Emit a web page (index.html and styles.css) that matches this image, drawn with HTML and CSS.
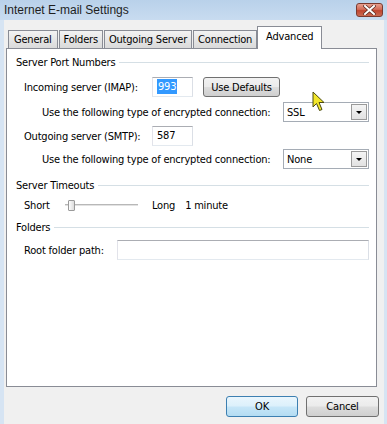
FILE: index.html
```html
<!DOCTYPE html>
<html lang="en">
<head>
  <meta charset="UTF-8" />
  <meta name="viewport" content="width=device-width, initial-scale=1" />
  <title>Internet E-mail Settings</title>
  <link rel="stylesheet" href="styles.css">
</head>
<body>
  <div class="window">
    <div class="titlebar">
      <span class="title">Internet E-mail Settings</span>
      <div class="close-btn">
        <svg width="13" height="10" viewBox="0 0 13 10">
          <path d="M2 1 L11 9 M11 1 L2 9" stroke="#5a2a22" stroke-width="3.4" stroke-linecap="square" />
          <path d="M2 1 L11 9 M11 1 L2 9" stroke="#fff" stroke-width="2" stroke-linecap="square" />
        </svg>
      </div>
    </div>

    <div class="client">
      <div class="tabs">
        <div class="tab">General</div>
        <div class="tab">Folders</div>
        <div class="tab">Outgoing Server</div>
        <div class="tab">Connection</div>
        <div class="tab active">Advanced</div>
      </div>

      <div class="panel">
        <div class="group-head"><span>Server Port Numbers</span><div class="rule"></div></div>

        <div class="row row-imap">
          <span class="label">Incoming server (IMAP):</span>
          <div class="textbox port"><span class="selected">993</span></div>
          <button class="btn defaults">Use Defaults</button>
        </div>

        <div class="row row-enc enc-1">
          <span class="label">Use the following type of encrypted connection:</span>
          <div class="combo">
            <span>SSL</span>
            <div class="combo-arrow"></div>
          </div>
        </div>

        <div class="row row-smtp">
          <span class="label">Outgoing server (SMTP):</span>
          <div class="textbox port">587</div>
        </div>

        <div class="row row-enc enc-2">
          <span class="label">Use the following type of encrypted connection:</span>
          <div class="combo">
            <span>None</span>
            <div class="combo-arrow"></div>
          </div>
        </div>

        <div class="group-head head-timeouts"><span>Server Timeouts</span><div class="rule"></div></div>

        <div class="row row-timeout">
          <span class="short">Short</span>
          <div class="track"><div class="thumb"></div></div>
          <span class="long">Long</span>
          <span>1 minute</span>
        </div>

        <div class="group-head head-folders"><span>Folders</span><div class="rule"></div></div>

        <div class="row row-root">
          <span class="label">Root folder path:</span>
          <div class="textbox wide"></div>
        </div>
      </div>

      <div class="footer">
        <button class="btn ok">OK</button>
        <button class="btn cancel">Cancel</button>
      </div>
    </div>

    <svg class="cursor" width="14" height="22" viewBox="0 0 14 22">
      <path d="M1 1 L1 16 L4.5 12.5 L7.5 19.5 L10 18.5 L7 11.5 L12 11.5 Z" fill="#f2e62a" stroke="#4a4a10" stroke-width="1" stroke-linejoin="miter" />
    </svg>
  </div>
</body>
</html>
```

FILE: styles.css
```css
body {
  margin: 0;
  width: 387px;
  height: 424px;
  overflow: hidden;
  font-family: "DejaVu Sans Condensed", "Liberation Sans", sans-serif;
  font-size: 11px;
  letter-spacing: -0.2px;
  color: #000;
}

.window {
  position: relative;
  height: 424px;
  background: #d6e4f3;
}

.titlebar {
  height: 20px;
  display: flex;
  align-items: center;
  justify-content: space-between;
  padding: 0 4px;
  background: linear-gradient(#b9d1ea, #c8dbf0);
}

.title {
  font-family: "Liberation Sans", sans-serif;
  font-size: 12px;
  letter-spacing: 0;
  color: #1e1e1e;
}

.close-btn {
  width: 27px;
  height: 14px;
  box-sizing: border-box;
  border: 1px solid #7a3a30;
  border-radius: 3px;
  background: linear-gradient(#e79f8f, #d26b57 45%, #c0452f 55%, #c96a52);
  display: flex;
  align-items: center;
  justify-content: center;
}

.client {
  margin: 0 3px 0 4px;
  height: 404px;
  box-sizing: border-box;
  padding-top: 6px;
  background: #f0f0f0;
}

/* tabs */
.tabs {
  display: flex;
  align-items: flex-end;
  height: 22px;
  padding-left: 4px;
}

.tab {
  height: 18px;
  box-sizing: border-box;
  border: 1px solid #898c95;
  border-bottom: none;
  background: linear-gradient(#f3f3f3, #e6e6e6 50%, #dadada);
  padding: 0 4px;
  line-height: 17px;
  margin-right: 1px;
}

.tab:first-child {
  padding: 0 5px;
}

.tab.active {
  height: 23px;
  margin-bottom: -1px;
  margin-left: -1px;
  background: #fff;
  line-height: 20px;
  padding: 0 8px;
  position: relative;
  z-index: 1;
}

.panel {
  margin-left: 2px;
  width: 371px;
  height: 339px;
  box-sizing: border-box;
  border: 1px solid #898c95;
  background: #fff;
  padding: 6px 7px 0 9px;
}

/* group headings */
.group-head {
  display: flex;
  align-items: center;
  gap: 4px;
  height: 14px;
}

.group-head .rule {
  flex: 1;
  border-top: 1px solid #d5dfe5;
}

.head-timeouts {
  margin-top: 9px;
}

.head-folders {
  margin-top: 7px;
}

/* rows */
.row {
  display: flex;
  align-items: center;
  height: 20px;
  padding-left: 8px;
}

.row .label {
  width: 128px;
  flex-shrink: 0;
}

.row-imap {
  margin-top: 8px;
}

.enc-1 {
  margin-top: 5px;
}

.row-smtp {
  margin-top: 4px;
}

.enc-2 {
  margin-top: 3px;
}

.row-enc {
  padding-left: 26px;
}

.row-enc .label {
  width: 241px;
}

.row-timeout {
  margin-top: 5px;
  height: 16px;
}

.row-root {
  margin-top: 6px;
}

.row-root .label {
  width: 93px;
}

/* inputs */
.textbox {
  height: 20px;
  box-sizing: border-box;
  border: 1px solid;
  border-color: #abadb3 #dbdfe6 #e3e9ef #e2e3ea;
  background: #fff;
  padding-left: 4px;
  line-height: 18px;
}

.textbox.port {
  width: 41px;
}

.textbox.wide {
  flex: 1;
}

.selected {
  background: #3399ff;
  color: #fff;
  padding: 1px 1px;
}

.combo {
  width: 86px;
  height: 20px;
  box-sizing: border-box;
  border: 1px solid #a5acb5;
  background: #fff;
  padding: 1px 1px 1px 3px;
  display: flex;
  align-items: center;
  justify-content: space-between;
}

.combo-arrow {
  width: 16px;
  height: 16px;
  box-sizing: border-box;
  border: 1px solid #9a9a9a;
  background: linear-gradient(#f4f4f4, #e2e2e2);
  display: flex;
  align-items: center;
  justify-content: center;
}

.combo-arrow::after {
  content: "";
  border-left: 3px solid transparent;
  border-right: 3px solid transparent;
  border-top: 3px solid #000;
  margin-top: 1px;
}

/* slider */
.short {
  width: 41px;
}

.track {
  position: relative;
  width: 73px;
  height: 1px;
  border-top: 1px solid #b8b8b8;
  border-bottom: 1px solid #fff;
  background: #e2e2e2;
}

.thumb {
  position: absolute;
  left: 3px;
  top: -5px;
  width: 5px;
  height: 9px;
  border: 1px solid #9a9a9a;
  border-radius: 1px;
  background: linear-gradient(90deg, #fdfdfd, #dcdcdc);
}

.long {
  margin-left: 14px;
  margin-right: 10px;
}

/* buttons */
.btn {
  font-family: inherit;
  font-size: 11px;
  letter-spacing: -0.2px;
  color: #000;
  height: 21px;
  padding: 0;
  box-sizing: border-box;
  border: 1px solid #707070;
  border-radius: 3px;
  background: linear-gradient(#f2f2f2, #ebebeb 48%, #dddddd 52%, #cfcfcf);
}

.defaults {
  width: 77px;
  height: 20px;
  margin-left: 10px;
}

.footer {
  display: flex;
  justify-content: flex-end;
  gap: 8px;
  margin-top: 9px;
  padding-right: 5px;
}

.ok {
  width: 72px;
  border-color: #3c7fb1;
  background: linear-gradient(#eaf6fd, #dcf0fb 48%, #c6e6f8 52%, #b4dcf2);
}

.cancel {
  width: 73px;
}

.cursor {
  position: absolute;
  left: 312px;
  top: 91px;
}
```
